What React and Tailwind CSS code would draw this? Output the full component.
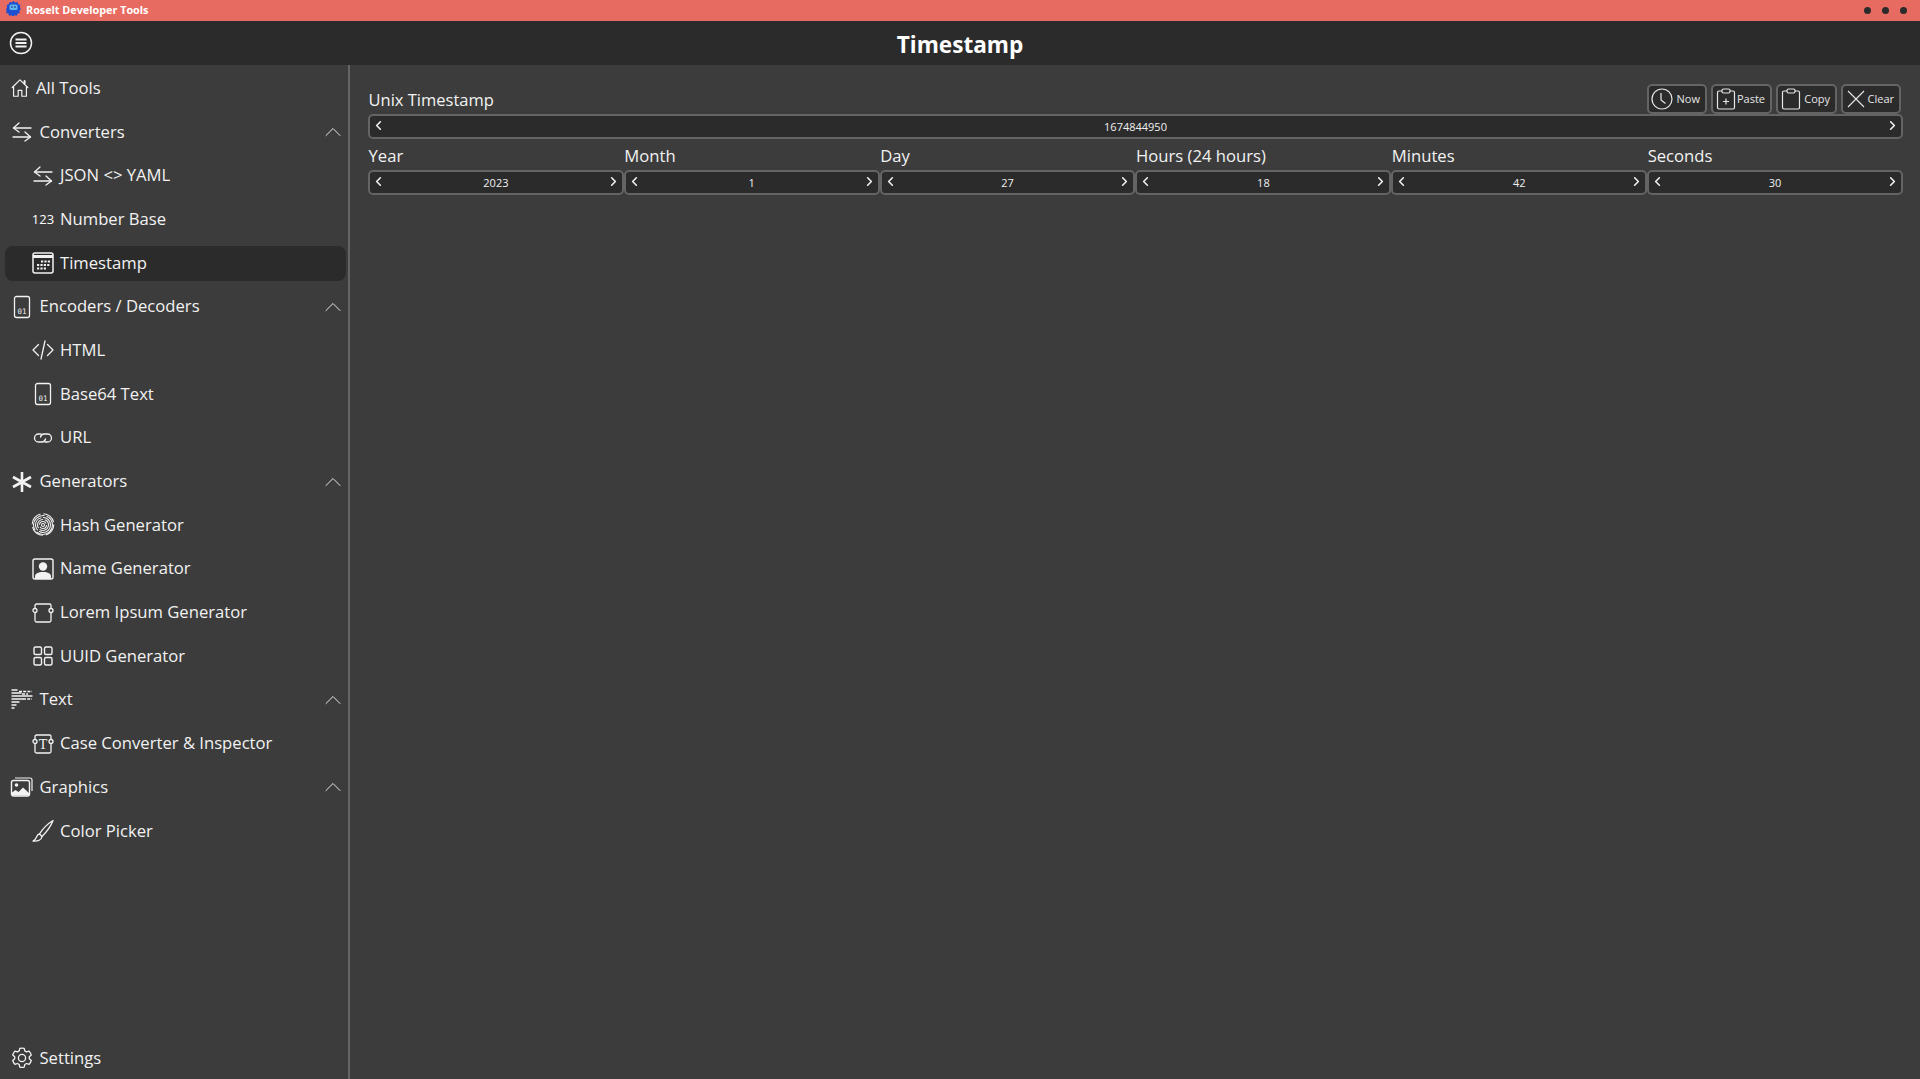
import React from "react";
import { ChevronUp, ChevronLeft, ChevronRight } from "lucide-react";

const Svg = ({ size = 24, children }) => (
  <svg width={size} height={size} viewBox="0 0 24 24" fill="none" stroke="currentColor" strokeWidth="1.3" strokeLinecap="round" strokeLinejoin="round">
    {children}
  </svg>
);

const HomeIcon = () => (
  <Svg size={22}>
    <path d="M3.5 11.5 12 3.200l8.500 8.300" />
    <path d="M5 10.500V21h5v-6.500h4V21h5V10.500" />
    <path d="M17 4.500V7" strokeWidth="2.200" />
  </Svg>
);

const ArrowsIcon = () => (
  <Svg>
    <path d="M9 3 3.500 8l5.500 4" />
    <path d="M3.500 8H21" />
    <path d="M15 12l5.500 5-5.500 4" />
    <path d="M3 17h17.500" />
  </Svg>
);

const CalendarIcon = () => (
  <svg width="24" height="24" viewBox="0 0 24 24" fill="none" stroke="currentColor">
    <rect x="2" y="2" width="20" height="20" rx="2" strokeWidth="1.500" />
    <path d="M2 5.500h20" strokeWidth="3" />
    <path d="M10 10.500h9M6 14h13M6 17.500h9" strokeWidth="2.200" strokeDasharray="2.200 1.200" />
  </svg>
);

const BinaryIcon = () => (
  <svg width="24" height="24" viewBox="0 0 24 24" fill="none" stroke="currentColor">
    <rect x="4.500" y="1.500" width="15" height="21" rx="2" strokeWidth="1.300" />
    <text x="12" y="19" fontSize="7.500" fontFamily="'DejaVu Sans Mono', monospace" fill="currentColor" stroke="none" textAnchor="middle">01</text>
  </svg>
);

const CodeIcon = () => (
  <Svg>
    <path d="M7.500 6.500 2 12l5.500 5.500" />
    <path d="M16.500 6.500 22 12l-5.500 5.500" />
    <path d="M14 3 10 21" />
  </Svg>
);

const LinkIcon = () => (
  <Svg>
    <path d="M10 8H7.500a4 4 0 0 0 0 8H11a4 4 0 0 0 3.500-3" />
    <path d="M14 16h2.500a4 4 0 0 0 0-8H13a4 4 0 0 0-3.500 3" />
  </Svg>
);

const AsteriskIcon = () => (
  <svg width="24" height="24" viewBox="0 0 24 24" fill="none" stroke="currentColor" strokeWidth="2.600">
    <path d="M12 2v20M3 7l18 10M21 7 3 17" />
  </svg>
);

const PrintIcon = () => (
  <svg width="24" height="24" viewBox="0 0 24 24" fill="none" stroke="currentColor" strokeWidth="1.100">
    <circle cx="12" cy="12" r="1.500" />
    <circle cx="12" cy="12" r="3.500" strokeDasharray="9 2" />
    <circle cx="12" cy="12" r="5.500" strokeDasharray="12 1.500" />
    <circle cx="12" cy="12" r="7.500" strokeDasharray="16 1.500" />
    <circle cx="12" cy="12" r="9.500" strokeDasharray="22 2" />
    <circle cx="12" cy="11.500" r="10.800" strokeDasharray="14 3" />
  </svg>
);

const PersonIcon = () => (
  <svg width="24" height="24" viewBox="0 0 24 24" fill="none">
    <rect x="2" y="2" width="20" height="20" rx="2" stroke="currentColor" strokeWidth="1.400" />
    <circle cx="12" cy="9.500" r="4.200" fill="currentColor" />
    <path d="M4 22v-2.500c0-3 3-4.500 8-4.500s8 1.500 8 4.500V22z" fill="currentColor" />
  </svg>
);

const BlockIcon = ({ letter }) => (
  <svg width="24" height="24" viewBox="0 0 24 24" fill="none" stroke="currentColor" strokeWidth="1.300">
    <path d="M4 7V4.500A1.500 1.500 0 0 1 5.500 3h13A1.500 1.500 0 0 1 20 4.500V7M4 11.500v8A1.500 1.500 0 0 0 5.500 21h13a1.500 1.500 0 0 0 1.500-1.500v-8" />
    <circle cx="4" cy="9.500" r="2" />
    <circle cx="20" cy="9.500" r="2" />
    {letter && (
      <text x="12" y="17" fontSize="14" fontFamily="'Liberation Serif', serif" fill="currentColor" stroke="none" textAnchor="middle">{letter}</text>
    )}
  </svg>
);

const GridIcon = () => (
  <svg width="24" height="24" viewBox="0 0 24 24" fill="none" stroke="currentColor" strokeWidth="1.400">
    <rect x="3" y="3" width="7.500" height="7.500" rx="1.500" />
    <rect x="13.500" y="3" width="7.500" height="7.500" rx="1.500" />
    <rect x="3" y="13.500" width="7.500" height="7.500" rx="1.500" />
    <rect x="13.500" y="13.500" width="7.500" height="7.500" rx="1.500" />
  </svg>
);

const TextLinesIcon = () => (
  <svg width="24" height="24" viewBox="0 0 24 24" fill="none" stroke="currentColor" strokeWidth="1.400">
    <path d="M1.500 2h6M1.500 5h10M1.500 8h21M1.500 11h12M1.500 14h8M1.500 17h5M1.500 20h3" />
    <path d="M9 3.500h13M13 11h9M12 6h6" strokeDasharray="3 1.200" />
  </svg>
);

const PicturesIcon = () => (
  <svg width="24" height="24" viewBox="0 0 24 24" fill="none">
    <path d="M5 3h15a2 2 0 0 1 2 2V16" stroke="currentColor" strokeWidth="1.200" />
    <rect x="1.500" y="5.500" width="18" height="15.500" rx="2" stroke="currentColor" strokeWidth="1.400" />
    <circle cx="6.500" cy="10" r="1.800" fill="currentColor" />
    <path d="M2 20.500v-3l3.500-2.500 3 2 4.500-4.500 6 5.500v2.500z" fill="currentColor" />
  </svg>
);

const BrushIcon = () => (
  <Svg>
    <path d="M22 1.500C18 4 11.500 10 8.500 15l2.500 2.500C15 13.500 20 7 22 1.500z" />
    <path d="M8.500 15C5 15 6.500 20.500 2 22c4 .5 8.500-.5 9-4.500" />
  </Svg>
);

const GearIcon = () => (
  <svg width="24" height="24" viewBox="0 0 24 24" fill="none" stroke="currentColor" strokeWidth="1.300" strokeLinejoin="round">
    <circle cx="12" cy="12" r="3.600" />
    <path d="M9.800 2.300a10 10 0 0 1 4.400 0l.6 2.600 1.700 1 2.600-.8a10 10 0 0 1 2.200 3.800l-2 1.800v2l2 1.800a10 10 0 0 1-2.200 3.800l-2.600-.8-1.700 1-.6 2.600a10 10 0 0 1-4.400 0l-.6-2.600-1.700-1-2.600.8a10 10 0 0 1-2.200-3.800l2-1.800v-2l-2-1.800a10 10 0 0 1 2.200-3.800l2.600.8 1.700-1z" />
  </svg>
);

const MenuIcon = () => (
  <svg width="24" height="24" viewBox="0 0 24 24" fill="none" stroke="currentColor">
    <circle cx="12" cy="12" r="10.500" strokeWidth="1.500" />
    <path d="M6.500 8.500h11M6.500 12h11M6.500 15.500h11" strokeWidth="1.800" />
  </svg>
);

const Logo = () => (
  <svg width="15" height="15" viewBox="0 0 15 15">
    <path d="M7.500 0l1.700 1.600 2.300-.5.700 2.200 2.200.8-.5 2.200L15 8l-1.600 1.700.5 2.200-2.300.6-.7 2.200-2.200-.5-1.700 1.300-1.700-1.300-2.200.5-.7-2.200-2.300-.6.500-2.200L0 8l1.100-1.700-.5-2.200 2.200-.8.700-2.200 2.300.5z" fill="#1d4fd0" />
    <rect x="3.500" y="3.500" width="8" height="5.500" rx="1.500" fill="#5fb6ee" />
    <path d="M6 5v2M9 5v2" stroke="#12327f" strokeWidth="1" />
  </svg>
);

const ClockIcon = () => (
  <svg width="22" height="22" viewBox="0 0 22 22" fill="none" stroke="currentColor" strokeWidth="1.200">
    <circle cx="11" cy="11" r="10" />
    <path d="M10 5v7l4.500 3.500" />
  </svg>
);

const PasteIcon = () => (
  <svg width="20" height="22" viewBox="0 0 20 22" fill="none" stroke="currentColor" strokeWidth="1.200">
    <path d="M6 3H3a1.500 1.500 0 0 0-1.500 1.500v15A1.500 1.500 0 0 0 3 21h14a1.500 1.500 0 0 0 1.500-1.500v-15A1.500 1.500 0 0 0 17 3h-3" />
    <rect x="6" y="1" width="8" height="4" rx="1.500" />
    <path d="M10 10.500v6M7 13.500h6" />
  </svg>
);

const CopyIcon = () => (
  <svg width="20" height="22" viewBox="0 0 20 22" fill="none" stroke="currentColor" strokeWidth="1.200">
    <path d="M6 3H3a1.500 1.500 0 0 0-1.500 1.500v15A1.500 1.500 0 0 0 3 21h14a1.500 1.500 0 0 0 1.500-1.500v-15A1.500 1.500 0 0 0 17 3h-3" />
    <rect x="6" y="1" width="8" height="4" rx="1.500" />
  </svg>
);

const ClearIcon = () => (
  <svg width="18" height="18" viewBox="0 0 18 18" fill="none" stroke="currentColor" strokeWidth="1.100">
    <path d="M1 1l16 16M17 1 1 17" />
  </svg>
);

const groups = [
  { label: "Converters", icon: <ArrowsIcon />, items: [
    { label: "JSON <> YAML", icon: <ArrowsIcon /> },
    { label: "Number Base", icon: <span className="text-[13px] leading-none text-white">123</span> },
    { label: "Timestamp", icon: <CalendarIcon />, active: true },
  ] },
  { label: "Encoders / Decoders", icon: <BinaryIcon />, items: [
    { label: "HTML", icon: <CodeIcon /> },
    { label: "Base64 Text", icon: <BinaryIcon /> },
    { label: "URL", icon: <LinkIcon /> },
  ] },
  { label: "Generators", icon: <AsteriskIcon />, items: [
    { label: "Hash Generator", icon: <PrintIcon /> },
    { label: "Name Generator", icon: <PersonIcon /> },
    { label: "Lorem Ipsum Generator", icon: <BlockIcon /> },
    { label: "UUID Generator", icon: <GridIcon /> },
  ] },
  { label: "Text", icon: <TextLinesIcon />, items: [
    { label: "Case Converter & Inspector", icon: <BlockIcon letter="T" /> },
  ] },
  { label: "Graphics", icon: <PicturesIcon />, items: [
    { label: "Color Picker", icon: <BrushIcon /> },
  ] },
];

const ToolButton = ({ icon, label, width }) => (
  <button className={`${width} h-[30px] flex items-center justify-between pl-[2px] pr-[5px] rounded-[5px] bg-[#2b2b2b] border-2 border-[#646464] text-[11px] text-[#e6e6e6]`}>
    <span className="w-[22px] flex justify-center">{icon}</span>
    <span>{label}</span>
  </button>
);

const Stepper = ({ value }) => (
  <div className="h-[25px] shrink-0 flex-none w-full flex items-center justify-between px-[1px] rounded-[5px] bg-[#2b2b2b] border-2 border-[#646464] text-[#f0f0f0]">
    <ChevronLeft size={15} strokeWidth={2.600} className="-mt-[3px]" />
    <span className="text-[11px] leading-none">{value}</span>
    <ChevronRight size={15} strokeWidth={2.600} className="-mt-[3px]" />
  </div>
);

const fields = [
  { label: "Year", value: "2023" },
  { label: "Month", value: "1" },
  { label: "Day", value: "27" },
  { label: "Hours (24 hours)", value: "18" },
  { label: "Minutes", value: "42" },
  { label: "Seconds", value: "30" },
];

export default function App() {
  return (
    <div className="h-screen flex flex-col overflow-hidden bg-[#3c3c3c] text-[#f2f2f2] font-['Open_Sans',sans-serif]">
      <div className="h-[21px] shrink-0 flex items-center justify-between bg-[#e86b61] pl-[6px] pr-[13px]">
        <div className="flex items-center gap-[5px] -mt-[5px]">
          <Logo />
          <span className="text-[10.800px] font-bold text-white mt-[5px]">Roselt Developer Tools</span>
        </div>
        <div className="flex items-center gap-[11px]">
          <span className="w-[7px] h-[7px] rounded-full bg-[#2b2b2b]" />
          <span className="w-[7px] h-[7px] rounded-full bg-[#2b2b2b]" />
          <span className="w-[7px] h-[7px] rounded-full bg-[#2b2b2b]" />
        </div>
      </div>

      <div className="relative h-[44px] shrink-0 flex items-center justify-center bg-[#2b2b2b]">
        <div className="absolute left-[9px] top-[10px]"><MenuIcon /></div>
        <h1 className="text-[22.600px] font-bold text-white mt-[4px]">Timestamp</h1>
      </div>

      <div className="flex flex-1 min-h-0">
        <aside className="w-[350px] shrink-0 flex flex-col border-r-2 border-[#646464] pt-[1.500px] text-[16.650px]">
          <div className="h-[43.700px] flex items-center gap-1 pl-2">
            <span className="w-6 flex justify-center"><HomeIcon /></span>
            <span>All Tools</span>
          </div>
          {groups.map((group) => (
            <div key={group.label}>
              <div className="h-[43.700px] flex items-center pl-[10px] pr-[1px]">
                <span className="w-6 flex justify-center">{group.icon}</span>
                <span className="ml-[5.500px] flex-1">{group.label}</span>
                <ChevronUp size={28} strokeWidth={0.800} />
              </div>
              {group.items.map((item) => (
                <div key={item.label} className="h-[43.700px] flex items-center">
                  <div className={`w-[341px] h-[35px] ml-[5px] pl-[26px] flex items-center rounded-lg ${item.active ? "bg-[#2b2b2b]" : ""}`}>
                    <span className="w-6 flex justify-center">{item.icon}</span>
                    <span className="ml-[5px]">{item.label}</span>
                  </div>
                </div>
              ))}
            </div>
          ))}
          <div className="mt-auto mb-[-1px] h-[43.700px] flex items-center pl-[10px]">
            <span className="w-6 flex justify-center"><GearIcon /></span>
            <span className="ml-[5.500px]">Settings</span>
          </div>
        </aside>

        <main className="flex-1 min-w-0 pl-[18px] pr-[17px] pt-[19px]">
          <div className="flex items-end justify-between pr-[2px]">
            <span className="text-[16.500px] leading-[26px] -mt-[1px] relative -top-[1px] ml-[0.500px]">Unix Timestamp</span>
            <div className="flex gap-1">
              <ToolButton icon={<ClockIcon />} label="Now" width="w-[60px]" />
              <ToolButton icon={<PasteIcon />} label="Paste" width="w-[61px]" />
              <ToolButton icon={<CopyIcon />} label="Copy" width="w-[61px]" />
              <ToolButton icon={<ClearIcon />} label="Clear" width="w-[60px]" />
            </div>
          </div>
          <div className="flex">
            <Stepper value="1674844950" />
          </div>
          <div className="flex mt-[3px]">
            {fields.map((field) => (
              <div key={field.label} className="flex-1 min-w-0 flex flex-col">
                <label className="text-[16.650px] leading-[28px] ml-[0.500px]">{field.label}</label>
                <Stepper value={field.value} />
              </div>
            ))}
          </div>
        </main>
      </div>
    </div>
  );
}
